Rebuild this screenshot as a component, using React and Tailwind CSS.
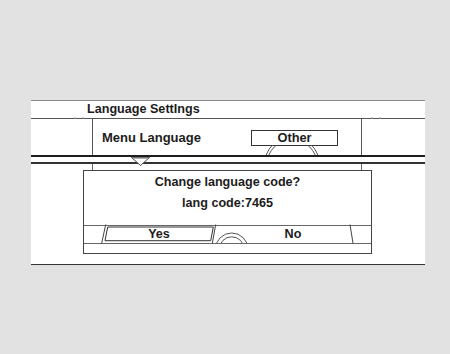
export default function App() {
  const font = { fontFamily: '"Liberation Sans", Arial, sans-serif' };
  return (
    <div className="w-[450px] h-[354px] bg-[#e2e2e2] overflow-hidden pt-[100px]" style={font}>
      <div className="relative ml-[31px] w-[394px] bg-white border-t border-b border-t-[#8a8a8a] border-b-[#333] text-[#1c1c1c] font-bold text-[12.6px] leading-[15px]">
        {/* title */}
        <div className="h-[17px] flex items-center pl-[56px]">Language SettIngs</div>
        {/* menu row */}
        <div className="h-[37px] border-t border-[#555] flex">
          <div className="w-[62px] border-r border-[#555]" />
          <div className="w-[269px] border-r border-[#555] flex items-center">
            <span className="pl-[9px] w-[158px] text-[13px]">Menu Language</span>
            <div className="w-[87px] h-[16px] border border-[#333] flex items-center justify-center mt-[1px] text-[12.8px]">
              Other
            </div>
          </div>
          <div className="flex-1" />
        </div>
        <div className="h-[2px] bg-[#1e1e1e]" />
        <div className="h-[5px]" />
        <div className="h-[1.5px] bg-[#333]" />
        <div className="h-[6.5px] flex">
          <div className="w-[62px] border-r border-[#666]" />
          <div className="w-[269px] border-r border-[#666]" />
        </div>
        {/* dialog */}
        <div className="ml-[52px] w-[289px] h-[84px] border border-[#444] flex flex-col">
          <div className="h-[53.5px] flex flex-col items-center pt-[4px]">
            <span>Change language code?</span>
            <span className="mt-[5.5px]">lang code:7465</span>
          </div>
          <div className="h-[19.5px] border-t border-b border-[#666] flex items-center">
            <span className="ml-[21px] w-[108px] text-center">Yes</span>
            <span className="ml-[20px] w-[120px] text-center">No</span>
          </div>
          <div className="flex-1" />
        </div>
        <div className="h-[10px]" />
        {/* drawings */}
        <svg className="absolute left-0 top-[-1px] pointer-events-none" width="394" height="166" viewBox="0 0 394 166">
          <defs>
            <clipPath id="dialClip">
              <rect x="0" y="45" width="394" height="10" />
            </clipPath>
            <clipPath id="rowClip">
              <rect x="0" y="125" width="394" height="18" />
            </clipPath>
          </defs>
          {/* ticks on title line */}
          <line x1="44" y1="17" x2="44" y2="19" stroke="#999" strokeWidth="1" />
          <line x1="52" y1="17" x2="52" y2="19" stroke="#999" strokeWidth="1" />
          <line x1="341" y1="17" x2="341" y2="19" stroke="#999" strokeWidth="1" />
          <line x1="349" y1="17" x2="349" y2="19" stroke="#999" strokeWidth="1" />
          {/* dial arcs under Other */}
          <g clipPath="url(#dialClip)" fill="none" stroke="#555" strokeWidth="1">
            <circle cx="261" cy="64.5" r="25" />
            <circle cx="261" cy="64.5" r="27.5" />
          </g>
          {/* triangle */}
          <polygon points="100.5,57.5 118.5,57.5 109.5,65.5" fill="#fff" stroke="#444" strokeWidth="1" />
          <line x1="101" y1="57.8" x2="118" y2="57.8" stroke="#777" strokeWidth="1.5" />
          {/* Yes button */}
          <polygon points="76.7,127 182.3,127 179.7,140.7 74,140.7" fill="none" stroke="#333" strokeWidth="1" />
          <line x1="74.7" y1="124.5" x2="70.7" y2="143.3" stroke="#444" strokeWidth="1" />
          <line x1="184.7" y1="124.5" x2="181.3" y2="143.3" stroke="#444" strokeWidth="1" />
          {/* arcs in row */}
          <g clipPath="url(#rowClip)" fill="none" stroke="#555" strokeWidth="1">
            <circle cx="200.7" cy="149.3" r="16.3" />
            <circle cx="200.7" cy="149.3" r="12.5" />
          </g>
          {/* No slanted */}
          <line x1="319" y1="124.5" x2="322" y2="143.3" stroke="#444" strokeWidth="1" />
        </svg>
      </div>
    </div>
  );
}
